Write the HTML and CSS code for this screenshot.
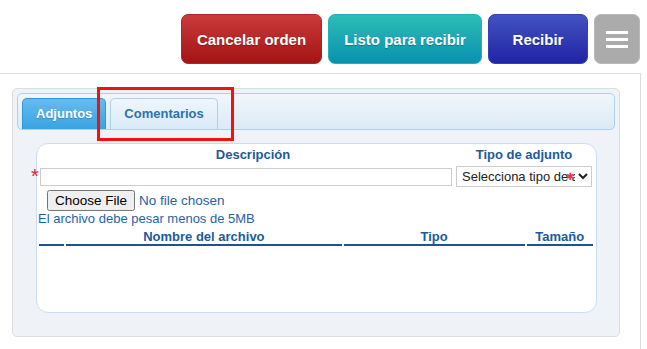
FILE: index.html
```html
<!DOCTYPE html>
<html lang="es">
<head>
<meta charset="UTF-8">
<meta name="viewport" content="width=device-width, initial-scale=1.0">
<title>Recepción de orden</title>
<link rel="stylesheet" href="styles.css">
</head>
<body>

<div class="toolbar">
  <button class="btn btn-cancel">Cancelar orden</button>
  <button class="btn btn-ready">Listo para recibir</button>
  <button class="btn btn-receive">Recibir</button>
  <button class="btn btn-menu" aria-label="Menú">
    <svg width="22" height="17" viewBox="0 0 22 17"><rect x="0" y="0" width="22" height="3" fill="#fff"/><rect x="0" y="7" width="22" height="3" fill="#fff"/><rect x="0" y="14" width="22" height="3" fill="#fff"/></svg>
  </button>
</div>

<div class="page">
  <div class="tabs">
    <ul class="tab-nav">
      <li class="tab active">Adjuntos</li>
      <li class="tab">Comentarios</li>
    </ul>
    <div class="tab-panel">
      <div class="form-head">
        <div class="col-desc">Descripción</div>
        <div class="col-type">Tipo de adjunto</div>
      </div>
      <div class="form-row">
        <span class="req req-left">*</span>
        <input class="desc-input" type="text">
        <div class="select-wrap">
          <select class="type-select">
            <option>Selecciona tipo de adjunto</option>
          </select>
          <span class="req req-select">✱</span>
        </div>
      </div>
      <div class="file-row"><input type="file"></div>
      <div class="hint">El archivo debe pesar menos de 5MB</div>
      <table class="files">
        <tr>
          <th class="c-check"></th>
          <th class="c-name">Nombre del archivo</th>
          <th class="c-type">Tipo</th>
          <th class="c-size">Tamaño</th>
        </tr>
      </table>
    </div>
  </div>
</div>

<div class="highlight"></div>

</body>
</html>
```

FILE: styles.css
```css
body {
  margin: 0;
  font-family: 'Liberation Sans', Arial, sans-serif;
  background: #fff;
  width: 647px;
  height: 349px;
  overflow: hidden;
  position: relative;
}
/* barra de botones superior */
.toolbar {
  display: flex;
  justify-content: flex-end;
  gap: 6px;
  padding: 14px 7px 0 0;
  height: 50px;
}
.btn {
  height: 50px;
  padding: 0;
  white-space: nowrap;
  border-radius: 7px;
  border: 1px solid transparent;
  font-family: 'Liberation Sans', Arial, sans-serif;
  font-weight: bold;
  font-size: 15px;
  color: #fff;
  text-shadow: 0 1px 1px rgba(0, 0, 0, 0.25);
}
.btn-cancel {
  width: 141px;
  background: linear-gradient(#c93a3a, #a51414);
  border-color: #b42424;
}
.btn-ready {
  width: 154px;
  background: linear-gradient(#2cbdb5, #0a91b1);
  border-color: #22b3b8;
}
.btn-receive {
  width: 100px;
  background: linear-gradient(#4252c0, #2124a6);
  border-color: #3540b5;
}
.btn-menu {
  width: 46px;
  background: #ababab;
  border-color: #b8b8b8;
  display: flex;
  align-items: center;
  justify-content: center;
}
/* contenedor principal */
.page {
  margin-top: 9px;
  width: 640px;
  height: 269px;
  border-top: 1px solid #dddddd;
  border-right: 1px solid #dddddd;
  border-bottom: 1px solid #dddddd;
  padding-top: 14px;
  box-sizing: content-box;
}
.tabs {
  margin-left: 12px;
  width: 598px;
  height: 239px;
  border: 1px solid #dddddd;
  border-radius: 5px;
  background: #eff3f7;
  padding: 4px;
}
.tab-nav {
  list-style: none;
  margin: 0;
  padding: 4px 4px 0 4px;
  height: 31px;
  display: flex;
  gap: 4px;
  border: 1px solid #aed0ea;
  border-radius: 5px;
  background: linear-gradient(#f1f6fb, #dbeaf6);
}
.tab {
  height: 31px;
  box-sizing: border-box;
  margin-bottom: -1px;
  padding: 0 13px;
  line-height: 30px;
  font-size: 13px;
  font-weight: bold;
  color: #2f73a8;
  border: 1px solid #aed0ea;
  border-bottom: none;
  border-radius: 5px 5px 0 0;
  background: linear-gradient(#eef6fd, #d9eaf7);
}
.tab.active {
  color: #fff;
  border-color: #2f98dc;
  background: linear-gradient(#66bbee, #3aa3e2);
  text-shadow: 0 1px 1px rgba(0, 0, 0, 0.2);
}
/* panel de adjuntos */
.tab-panel {
  margin: 13px 18px 0 19px;
  height: 168px;
  background: #fff;
  border: 1px solid #c9def6;
  border-radius: 12px;
  color: #1f62a8;
  position: relative;
}
.form-head {
  display: flex;
  gap: 4px;
  padding: 3px 3px 0 3px;
  height: 16px;
  font-size: 13px;
  font-weight: bold;
  color: #1c5a9c;
  line-height: 16px;
}
.col-desc {
  width: 412px;
  text-align: center;
  padding-left: 14px;
  box-sizing: border-box;
}
.col-type {
  width: 136px;
  text-align: center;
}
.form-row {
  display: flex;
  gap: 4px;
  align-items: center;
  padding: 3px 3px 0 3px;
  position: relative;
}
.desc-input {
  width: 412px;
  height: 18px;
  box-sizing: border-box;
  border: 1px solid #cccccc;
  margin: 0;
}
.select-wrap {
  position: relative;
}
.type-select {
  width: 136px;
  height: 21px;
  box-sizing: border-box;
  border: 1px solid #cccccc;
  border-radius: 0;
  background: #fff;
  font-family: 'Liberation Sans', Arial, sans-serif;
  font-size: 13px;
  color: #222;
  padding: 0 0 0 1px;
  margin: 0;
}
.req {
  color: #e8202a;
  position: absolute;
}
.req-left {
  left: -6px;
  top: 3px;
  font-size: 20px;
  line-height: 20px;
}
.req-select {
  left: 110px;
  top: 4px;
  font-size: 10px;
  line-height: 14px;
  color: #f0305a;
}
.file-row {
  padding: 3px 0 0 10px;
  height: 21px;
  font-size: 13px;
}
.file-row input {
  font-family: 'Liberation Sans', Arial, sans-serif;
  font-size: 13.5px;
  color: #1f62a8;
}
.hint {
  padding: 0 0 0 1px;
  font-size: 13px;
  line-height: 16px;
}
table.files {
  margin: 2px 0 0 0;
  border-spacing: 2px 0;
  width: 558px;
}
table.files th {
  padding: 0;
  font-size: 13px;
  line-height: 15px;
  color: #1c5a9c;
  border-bottom: 2px solid #1a5494;
}
.c-check { width: 25px; }
.c-name { width: 274px; }
.c-type { width: 180px; }
.c-size { width: 66px; }
/* recuadro rojo de resaltado */
.highlight {
  position: absolute;
  left: 97px;
  top: 87px;
  width: 131px;
  height: 48px;
  border: 3px solid #f21010;
}
```
